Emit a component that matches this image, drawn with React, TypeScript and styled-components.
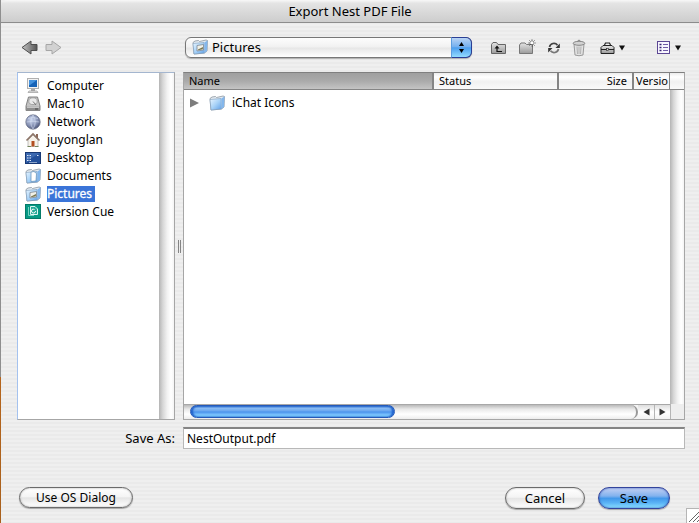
import React from "react";
import styled, { createGlobalStyle, css } from "styled-components";

const GlobalStyle = createGlobalStyle`
  *, *::before, *::after { box-sizing: border-box; }
  body { margin: 0; background: #8f8f8f; }
  button, input, select { font: inherit; color: inherit; margin: 0; }
`;

const fontStack = `"Lucida Grande", "Noto Sans", "Open Sans", sans-serif`;
const groove = `linear-gradient(90deg, #b4b4b4, #d6d6d6 25%, #f2f2f2 55%, #ffffff 80%, #f4f4f4)`;

const Dialog = styled.main`
  position: relative;
  display: flex;
  flex-direction: column;
  min-height: 100vh;
  border-left: 1px solid;
  border-image: linear-gradient(180deg, #8f8f8f 72%, #b5651d 72%, #a8601c) 1;
  background: repeating-linear-gradient(180deg, #efefef 0 2px, #eaeaea 2px 4px);
  color: #000;
  font: 12px/18px ${fontStack};
`;

const TitleBar = styled.header`
  height: 23px;
  border-bottom: 1px solid #8c8c8c;
  border-top-left-radius: 6px;
  background: linear-gradient(180deg, #f8f8f8, #e4e4e4 15%, #cdcdcd);
`;

const Title = styled.h1`
  margin: 0;
  font-size: 13px;
  line-height: 22px;
  font-weight: 400;
  text-align: center;
`;

const Toolbar = styled.div`
  display: flex;
  align-items: center;
  height: 49px;
  padding: 0 14px 0 16px;
`;

const NavGroup = styled.nav`
  display: flex;
  gap: 7px;
  flex: 0 0 168px;
  padding-left: 4px;
`;

const IconButton = styled.button`
  display: flex;
  align-items: center;
  gap: 3px;
  padding: 0;
  border: 0;
  background: none;
  svg { display: block; }
`;

const FolderPicker = styled.div`
  position: relative;
  flex: 0 1 287px;
`;

const PickerSelect = styled.select`
  appearance: none;
  display: block;
  width: 100%;
  height: 21px;
  padding: 0 28px 0 26px;
  border: 1px solid #777;
  border-radius: 6px;
  background: linear-gradient(180deg, #fdfdfd, #f1f1f1 48%, #e6e6e6 52%, #fff);
  box-shadow: 0 1px 1px rgba(0, 0, 0, 0.25);
  font-size: 13px;
  line-height: 19px;
`;

const PickerIcon = styled.span`
  position: absolute;
  left: 7px;
  top: 2px;
  pointer-events: none;
  svg { display: block; }
`;

const PickerArrows = styled.span`
  position: absolute;
  inset: 0 0 0 auto;
  width: 21px;
  display: grid;
  place-items: center;
  border: 1px solid #2a3f96;
  border-left-color: #5d9de0;
  border-radius: 0 6px 6px 0;
  background: linear-gradient(180deg, #b9d3f4, #75b0ef 45%, #4d9eee 52%, #92dcff);
  pointer-events: none;
`;

const ToolGroup = styled.div`
  display: flex;
  align-items: center;
  gap: 11px;
  margin-left: 18px;
`;

const MenuGroup = styled.div`
  margin-left: 14px;
`;

const ViewGroup = styled.div`
  margin-left: auto;
  padding-right: 3px;
`;

const Panes = styled.div`
  display: flex;
  flex: 1;
  min-height: 348px;
  padding: 0 14px 0 16px;
`;

const SidePane = styled.aside`
  display: grid;
  grid-template-columns: 1fr 15px;
  flex: 0 0 158px;
  border: 1px solid #a6a6a6;
  border-left-color: #a4c2ef;
  border-top-color: #a4b6cf;
  background: #fff;
`;

const Places = styled.ul`
  margin: 0;
  padding: 4px 0 0 7px;
  list-style: none;
`;

const Place = styled.button`
  display: flex;
  align-items: center;
  gap: 6px;
  height: 18px;
  padding: 0;
  border: 0;
  background: none;
  svg { display: block; }
`;

const PlaceName = styled.span<{ $selected?: boolean }>`
  line-height: 16px;
  white-space: nowrap;
  ${(p) => p.$selected && css`
    padding-right: 3px;
    background: #3a74d8;
    color: #fff;
    -webkit-text-stroke: 0.3px #fff;
  `}
`;

const VerticalTrack = styled.div`
  background: ${groove};
`;

const Splitter = styled.div`
  display: flex;
  flex: 0 0 8px;
  align-items: center;
  justify-content: center;
  gap: 1px;
  i { width: 1px; height: 13px; background: #858585; }
`;

const FilePane = styled.section`
  display: grid;
  grid-template-columns: minmax(0, 1fr) 14px;
  grid-template-rows: 1fr 15px;
  flex: 1;
  min-width: 0;
  border: 1px solid #a6a6a6;
  border-top-color: #7f7f7f;
  background: #fff;
`;

const TableClip = styled.div`
  overflow: hidden;
`;

const FileTable = styled.table`
  width: 100%;
  table-layout: fixed;
  border-collapse: separate;
  border-spacing: 0;
`;

const HeadCell = styled.th<{ $active?: boolean; $width?: number; $align?: string }>`
  width: ${(p) => (p.$width ? `${p.$width}px` : "auto")};
  height: 17px;
  padding: 0 5px;
  border-right: 2px solid #858585;
  border-bottom: 1px solid #858585;
  background: ${(p) => p.$active
    ? "linear-gradient(180deg, #9f9f9f, #aaaaaa 50%, #c4c4c4)"
    : "linear-gradient(180deg, #ececec, #ffffff 25%, #f1f1f1 55%, #fafafa)"};
  font-size: 11px;
  line-height: 16px;
  font-weight: 400;
  text-align: ${(p) => p.$align ?? "left"};
  white-space: nowrap;
  &:last-child { border-right: 1px solid #858585; padding: 0 0 0 2px; }
`;

const FileCell = styled.td`
  height: 26px;
  padding: 0 0 0 5px;
`;

const FileEntry = styled.div`
  display: flex;
  align-items: center;
  svg { display: block; }
  button { margin-right: 10px; }
  span { padding-left: 7px; }
`;

const FileTrack = styled.div`
  display: flex;
  flex-direction: column;
  background: ${groove};
  &::before {
    content: "";
    height: 17px;
    border-bottom: 1px solid #858585;
    background: linear-gradient(180deg, #ececec, #fff 25%, #f1f1f1 55%, #fafafa);
  }
`;

const ScrollBar = styled.div`
  display: flex;
  border-top: 1px solid #a8a8a8;
  background: #f4f4f4;
`;

const ScrollTrough = styled.div`
  flex: 1;
  padding-left: 6px;
  border-radius: 0 8px 8px 0;
  border-right: 2px solid #999;
  background: linear-gradient(180deg, #b9b9b9, #e9e9e9 30%, #ffffff 65%, #ededed);
`;

const ScrollThumb = styled.div`
  width: 46%;
  height: 13px;
  border: 1px solid #2559b8;
  border-radius: 7px;
  background: linear-gradient(180deg, #3a78d2, #8cbdf3 20%, #6eaaf0 42%, #4b94ec 55%, #73bbfb 75%, #8bdcff);
  box-shadow: inset 2px 0 2px #1d5fcb, inset -2px 0 2px #1d5fcb;
`;

const ScrollStep = styled.button<{ $divided?: boolean }>`
  display: grid;
  place-items: center;
  width: 16px;
  padding: 0;
  border: 0;
  border-left: ${(p) => (p.$divided ? "1px solid #b5b5b5" : "0")};
  background: linear-gradient(180deg, #dedede, #fff 50%, #f2f2f2);
  svg { display: block; }
`;

const Corner = styled.div`
  border-left: 1px solid #b5b5b5;
  background: #eeeeee;
`;

const SaveRow = styled.div`
  display: flex;
  gap: 8px;
  margin-top: 7px;
  padding: 0 14px 0 16px;
`;

const SaveLabel = styled.label`
  flex: 0 0 158px;
  font-size: 13px;
  line-height: 22px;
  text-align: right;
`;

const SaveInput = styled.input`
  flex: 1;
  min-width: 0;
  height: 22px;
  padding: 0 3px;
  border: 1px solid #b8b8b8;
  border-top: 2px solid #858585;
  background: #fff;
  line-height: 18px;
  outline: 0;
`;

const Actions = styled.footer`
  display: flex;
  gap: 13px;
  margin-top: 38px;
  padding: 0 29px 14px 18px;
`;

const PillButton = styled.button<{ $primary?: boolean; $width: number; $small?: boolean }>`
  width: ${(p) => p.$width}px;
  height: ${(p) => (p.$small ? 21 : 22)}px;
  padding: 0;
  border: 1px solid ${(p) => (p.$primary ? "#33449c" : "#6b6b6b")};
  border-radius: 11px;
  background: ${(p) => p.$primary
    ? "linear-gradient(180deg, #c3d0f3, #82b2ee 40%, #4298ea 52%, #5bb4f6 75%, #8be0ff)"
    : "linear-gradient(180deg, #ffffff, #f4f4f4 46%, #e5e5e5 52%, #ffffff)"};
  box-shadow: inset 0 0 2px ${(p) => (p.$primary ? "#2a4fb0" : "#a0a0a0")}, 0 1px 1px rgba(0, 0, 0, 0.3);
  font-size: ${(p) => (p.$small ? 12 : 13)}px;
  line-height: 18px;
  &:first-child { margin-right: auto; }
`;

const ResizeGrip = styled.svg`
  position: absolute;
  right: 0;
  bottom: 0;
`;

function Gradients() {
  return (
    <svg width="0" height="0" display="block" aria-hidden="true">
      <defs>
        <linearGradient id="folderBlue" x1="0" y1="0" x2="1" y2="1">
          <stop offset="0" stopColor="#e9f5ff" /><stop offset="0.5" stopColor="#a9d3f8" /><stop offset="1" stopColor="#5f9fe6" />
        </linearGradient>
        <linearGradient id="arrowGray" x1="0" y1="0" x2="1" y2="0">
          <stop offset="0" stopColor="#c4c4c4" /><stop offset="1" stopColor="#555" />
        </linearGradient>
        <linearGradient id="toolGray" x1="0" y1="0" x2="0" y2="1">
          <stop offset="0" stopColor="#e4e4e4" /><stop offset="1" stopColor="#9a9a9a" />
        </linearGradient>
        <radialGradient id="globe" cx="0.4" cy="0.35" r="0.7">
          <stop offset="0" stopColor="#c9d4ee" /><stop offset="0.6" stopColor="#8792b4" /><stop offset="1" stopColor="#434d72" />
        </radialGradient>
      </defs>
    </svg>
  );
}

function Icon({ width = 16, height = 16, children }: { width?: number; height?: number; children: React.ReactNode }) {
  return <svg width={width} height={height} viewBox={`0 0 ${width} ${height}`} fill="none" aria-hidden="true">{children}</svg>;
}

function FolderIcon({ kind }: { kind?: "picture" | "document" }) {
  return (
    <Icon>
      <path d="M1 3.5 L3 2 L6.5 1.5 L7.5 2.5 L14 1 L15.5 1.5 L15 12 L12.5 14 L2 15 Z" fill="#e4ebf1" stroke="#8b959f" strokeWidth="0.8" />
      <path d="M1 4.5 L12 3.5 L12.5 14 L2 15 Z" fill="url(#folderBlue)" stroke="#7e9cbb" strokeWidth="0.6" />
      <path d="M12.3 3.5 L15.5 1.5 L15 12 L12.5 14 Z" fill="#84b7ec" />
      {kind === "picture" && (
        <g>
          <path d="M5 6.5 L11.5 5.5 L11.5 11 L5 12 Z" fill="#f1f1e8" stroke="#7d8792" strokeWidth="0.8" />
          <path d="M6 10.5 L8 9.5 L11 8 L10.8 10.3 L6 11.2 Z" fill="#77744d" />
        </g>
      )}
      {kind === "document" && <path d="M6 4 L9 3.5 L11.5 5.5 L11 13 L6 13.5 Z" fill="#fff" stroke="#6f98bc" strokeWidth="0.8" />}
    </Icon>
  );
}

const ComputerIcon = () => (
  <Icon>
    <rect x="2.5" y="0.5" width="11" height="10" fill="#f3f3f3" stroke="#b0b0b0" />
    <rect x="4" y="2" width="8" height="7" fill="#1763b7" />
    <path d="M4 2 H12 L5 7 H4Z" fill="#4593de" />
    <path d="M6 11 H10 V13 H6Z" fill="#aaa" />
    <path d="M4 13 H12 L13 14.5 H3Z" fill="#e8e8e8" stroke="#999" strokeWidth="0.7" />
  </Icon>
);

const DriveIcon = () => (
  <Icon>
    <path d="M3.5 1 H12.5 L15 10 V14.5 H1 V10Z" fill="#c4c4c4" stroke="#777" strokeWidth="0.9" />
    <ellipse cx="8" cy="5.2" rx="4.2" ry="3.4" fill="#e9e9e9" stroke="#969696" strokeWidth="0.8" />
    <path d="M8 5.5 L11 9" stroke="#777" />
    <path d="M1 10.5 H15 V14.5 H1Z" fill="#8d8d8d" />
    <path d="M2 11.2 H14" stroke="#dedede" />
    <path d="M10 13 H13" stroke="#444" />
  </Icon>
);

const NetworkIcon = () => (
  <Icon>
    <circle cx="8" cy="8" r="7.2" fill="url(#globe)" stroke="#626981" strokeWidth="0.7" />
    <path d="M3 4.5 Q8 2.5 13 4.5 M1.5 8 Q8 6.5 14.5 8 M8 1 Q3.5 8 8 15 M8 1 Q12.5 8 8 15" stroke="#d5dff2" strokeWidth="0.6" />
  </Icon>
);

const HomeIcon = () => (
  <Icon>
    <path d="M3 8 L8 3 L13 8 V14.5 H3Z" fill="#f6f1e9" stroke="#aaa" strokeWidth="0.7" />
    <path d="M11 2 H13 V6 H11Z" fill="#8d6858" />
    <path d="M1.5 8.5 L8 2 L14.5 8.5" stroke="#8d7568" strokeWidth="1.6" />
    <path d="M6.5 9 H9.5 V14.5 H6.5Z" fill="#b34e20" />
    <path d="M2.5 14.5 H6 M10 14.5 H13.5" stroke="#73855d" />
  </Icon>
);

const DesktopIcon = () => (
  <Icon>
    <rect x="0.5" y="2.5" width="15" height="11" fill="#24509a" stroke="#173875" />
    <path d="M1 3 H15 L5 9 L1 13Z" fill="#3c69b0" />
    <path d="M2 5.5 H6 M2 8 H6 M2 10.5 H6 M12 5.5 H14" stroke="#e1eafa" strokeWidth="1.2" strokeDasharray="1.5 1" />
    <path d="M4 12.5 H12" stroke="#8ba4ca" />
  </Icon>
);

const VersionCueIcon = () => (
  <Icon>
    <rect x="0.5" y="0.5" width="15" height="14" fill="#079a85" stroke="#057b69" />
    <path d="M3.5 3 V11.5 H9" stroke="#78d2c3" />
    <path d="M5.5 2.5 H10 L12.5 5 V10.5 H5.5Z" fill="#27aa98" stroke="#dcf7f2" />
    <path d="M10.5 7 A2 2 0 1 1 8.5 5 L9.5 6" stroke="#fff" />
  </Icon>
);

const CaretDown = () => <Icon width={8} height={6}><path d="M1 0.5 H7 L4 5.5Z" fill="#111" /></Icon>;

const ArrowIcon = ({ forward }: { forward?: boolean }) => (
  <Icon width={17} height={15}>
    {forward
      ? <path d="M1 4.5 H7 V1 L16 7.5 L7 14 V10.5 H1Z" fill="#d2d2d2" stroke="#a6a6a6" />
      : <path d="M16 4.5 H10 V1 L1 7.5 L10 14 V10.5 H16Z" fill="url(#arrowGray)" stroke="#4e4e4e" />}
  </Icon>
);

const UpFolderIcon = () => (
  <Icon width={17} height={16}>
    <path d="M1.5 13.5 V4.5 L3 2.5 H6.5 L8 4.5 H15.5 V13.5Z" fill="url(#toolGray)" stroke="#666" />
    <path d="M12 11.5 H7 V7" stroke="#111" strokeWidth="1.2" />
    <path d="M4.5 8.5 L7 5.5 L9.5 8.5Z" fill="#111" />
  </Icon>
);

const NewFolderIcon = () => (
  <Icon width={18} height={18}>
    <path d="M1.5 14.5 V6 L3 4 H7 L8.5 5.5 H14.5 V14.5Z" fill="url(#toolGray)" stroke="#777" />
    <path d="M14 0.5 V7.5 M10.5 4 H17.5 M11.5 1.5 L16.5 6.5 M16.5 1.5 L11.5 6.5" stroke="#222" strokeWidth="0.8" strokeDasharray="1.4 0.6" />
    <circle cx="14" cy="4" r="1.3" fill="#fff" />
  </Icon>
);

const RefreshIcon = () => (
  <Icon width={14} height={14}>
    <path d="M2.5 6 A4.5 4.5 0 0 1 10.5 4.2" stroke="#444" strokeWidth="1.7" />
    <path d="M12.8 2.5 V7 H8.5Z" fill="#333" />
    <path d="M11.5 8 A4.5 4.5 0 0 1 3.5 9.8" stroke="#777" strokeWidth="1.7" />
    <path d="M1.2 11.5 V7 H5.5Z" fill="#333" />
  </Icon>
);

const TrashIcon = () => (
  <Icon width={14} height={18}>
    <path d="M2 5 H12 L11 16 Q7 17.5 3 16Z" fill="#e3e3e3" stroke="#999" />
    <path d="M5 7.5 L5.5 15 M9 7.5 L8.5 15 M7 7.5 V15" stroke="#a5a5a5" strokeWidth="0.8" />
    <ellipse cx="7" cy="4.3" rx="5.8" ry="2" fill="#d2d2d2" stroke="#888" />
    <path d="M5 2.8 Q7 -0.5 9 2.8" stroke="#888" />
  </Icon>
);

const BriefcaseIcon = () => (
  <Icon width={15} height={14}>
    <path d="M4.5 4 L5.5 2 H9.5 L10.5 4" stroke="#222" strokeWidth="1.2" />
    <path d="M1 6.5 L3 4.5 H12 L14 6.5 V12.5 H1Z" fill="url(#toolGray)" stroke="#222" />
    <path d="M1 8.5 H14" stroke="#222" />
    <rect x="6.5" y="7.5" width="2" height="2" fill="#ddd" stroke="#222" strokeWidth="0.6" />
  </Icon>
);

const ListIcon = () => (
  <Icon width={14} height={14}>
    <rect x="0.5" y="0.5" width="12" height="12" fill="#f8f6ff" stroke="#5c4794" />
    <path d="M2.5 3.5 H4.5 M2.5 6.5 H4.5 M2.5 9.5 H4.5" stroke="#35206f" strokeWidth="1.6" />
    <path d="M6 3.5 H11 M6 6.5 H11 M6 9.5 H11" stroke="#6f5ba6" />
  </Icon>
);

const places = [
  { name: "Computer", icon: <ComputerIcon /> },
  { name: "Mac10", icon: <DriveIcon /> },
  { name: "Network", icon: <NetworkIcon /> },
  { name: "juyonglan", icon: <HomeIcon /> },
  { name: "Desktop", icon: <DesktopIcon /> },
  { name: "Documents", icon: <FolderIcon kind="document" /> },
  { name: "Pictures", icon: <FolderIcon kind="picture" />, selected: true },
  { name: "Version Cue", icon: <VersionCueIcon /> },
];

export default function App() {
  return (
    <Dialog>
      <GlobalStyle />
      <TitleBar><Title>Export Nest PDF File</Title></TitleBar>

      <Toolbar>
        <NavGroup aria-label="History">
          <IconButton aria-label="Back"><ArrowIcon /></IconButton>
          <IconButton aria-label="Forward"><ArrowIcon forward /></IconButton>
        </NavGroup>
        <FolderPicker>
          <PickerSelect aria-label="Folder" defaultValue="Pictures"><option>Pictures</option></PickerSelect>
          <PickerIcon><FolderIcon kind="picture" /></PickerIcon>
          <PickerArrows>
            <Icon width={7} height={13}>
              <path d="M1 5 L3.5 1 L6 5Z M1 8 L3.5 12 L6 8Z" fill="#000" />
            </Icon>
          </PickerArrows>
        </FolderPicker>
        <ToolGroup>
          <IconButton aria-label="Up one level"><UpFolderIcon /></IconButton>
          <IconButton aria-label="New folder"><NewFolderIcon /></IconButton>
          <IconButton aria-label="Refresh"><RefreshIcon /></IconButton>
          <IconButton aria-label="Delete"><TrashIcon /></IconButton>
        </ToolGroup>
        <MenuGroup>
          <IconButton aria-label="Project tools"><BriefcaseIcon /><CaretDown /></IconButton>
        </MenuGroup>
        <ViewGroup>
          <IconButton aria-label="View"><ListIcon /><CaretDown /></IconButton>
        </ViewGroup>
      </Toolbar>

      <Panes>
        <SidePane>
          <Places>
            {places.map((p) => (
              <li key={p.name}>
                <Place>{p.icon}<PlaceName $selected={p.selected}>{p.name}</PlaceName></Place>
              </li>
            ))}
          </Places>
          <VerticalTrack />
        </SidePane>
        <Splitter><i /><i /></Splitter>
        <FilePane>
          <TableClip>
            <FileTable>
              <thead>
                <tr>
                  <HeadCell $active>Name</HeadCell>
                  <HeadCell $width={125}>Status</HeadCell>
                  <HeadCell $width={75} $align="right">Size</HeadCell>
                  <HeadCell $width={36}>Versio</HeadCell>
                </tr>
              </thead>
              <tbody>
                <tr>
                  <FileCell colSpan={4}>
                    <FileEntry>
                      <IconButton aria-label="Expand iChat Icons">
                        <Icon width={10} height={10}><path d="M1 0.5 L10 5 L1 9.5Z" fill="#7d7d7d" /></Icon>
                      </IconButton>
                      <FolderIcon />
                      <span>iChat Icons</span>
                    </FileEntry>
                  </FileCell>
                </tr>
              </tbody>
            </FileTable>
          </TableClip>
          <FileTrack />
          <ScrollBar>
            <ScrollTrough><ScrollThumb /></ScrollTrough>
            <ScrollStep aria-label="Scroll left">
              <Icon width={7} height={8}><path d="M6.5 0.5 V7.5 L0.5 4Z" fill="#333" /></Icon>
            </ScrollStep>
            <ScrollStep $divided aria-label="Scroll right">
              <Icon width={7} height={8}><path d="M0.5 0.5 V7.5 L6.5 4Z" fill="#333" /></Icon>
            </ScrollStep>
          </ScrollBar>
          <Corner />
        </FilePane>
      </Panes>

      <SaveRow>
        <SaveLabel htmlFor="file-name">Save As:</SaveLabel>
        <SaveInput id="file-name" defaultValue="NestOutput.pdf" />
      </SaveRow>

      <Actions>
        <PillButton $width={114} $small>Use OS Dialog</PillButton>
        <PillButton $width={80}>Cancel</PillButton>
        <PillButton $width={72} $primary>Save</PillButton>
      </Actions>

      <ResizeGrip width="13" height="15" viewBox="0 0 13 15" aria-hidden="true">
        <rect x="0.5" y="0.5" width="14" height="16" fill="#fff" stroke="#b5b5b5" />
        <path d="M3 14 L13 4 M7 14 L13 8 M11 14 L13 12" stroke="#666" fill="none" />
      </ResizeGrip>
      <Gradients />
    </Dialog>
  );
}
